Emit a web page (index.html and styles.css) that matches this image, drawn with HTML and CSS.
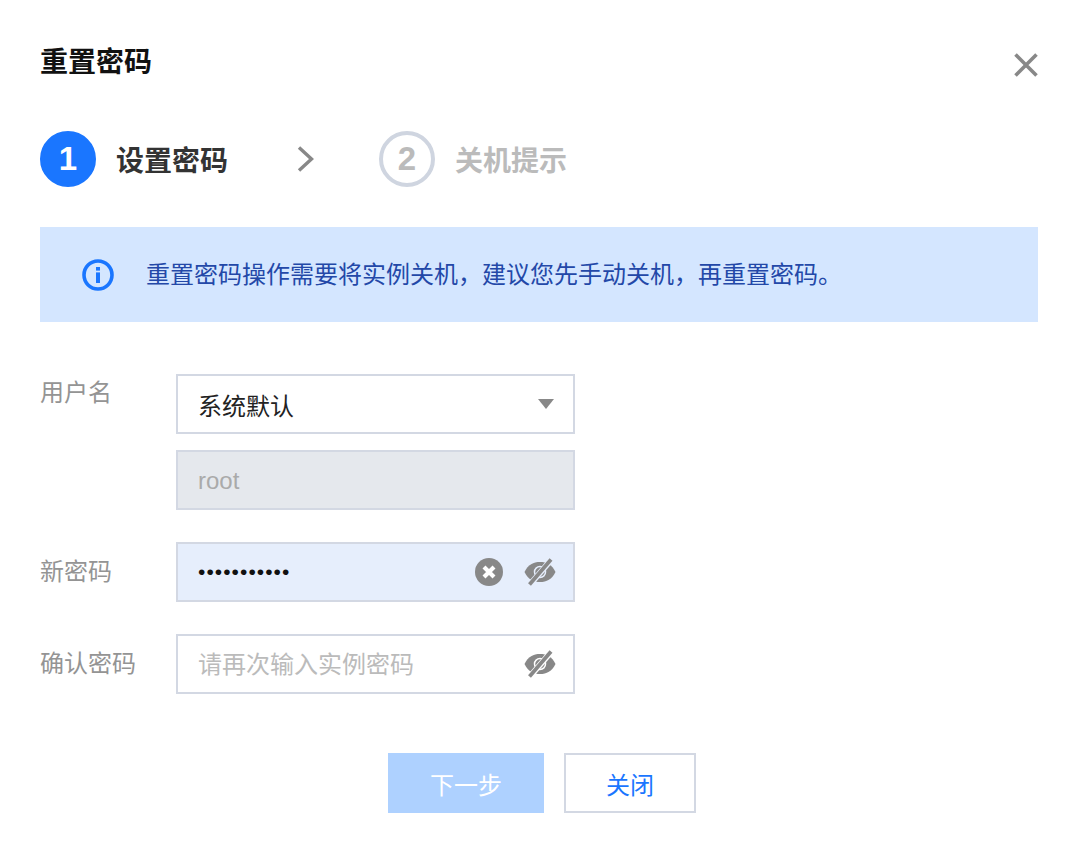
FILE: index.html
```html
<!DOCTYPE html>
<html lang="zh-CN">
<head>
  <meta charset="UTF-8">
  <meta name="viewport" content="width=device-width, initial-scale=1.0">
  <title>重置密码</title>
  <link rel="stylesheet" href="styles.css">
</head>
<body>
  <div class="dialog">
    <div class="dialog-head">
      <h1>重置密码</h1>
      <svg class="close-icon" viewBox="0 0 24 24" width="24" height="24"><path d="M1.5 1.500 22.500 22.500M22.500 1.500 1.500 22.500" stroke="#888" stroke-width="3.6" fill="none"/></svg>
    </div>

    <div class="steps">
      <div class="step active"><span class="step-num">1</span><span class="step-name">设置密码</span></div>
      <svg class="step-arrow" viewBox="0 0 17 26" width="17" height="26"><path d="M2 1.500 14.500 13 2 24.500" stroke="#888" stroke-width="3.4" fill="none"/></svg>
      <div class="step"><span class="step-num">2</span><span class="step-name">关机提示</span></div>
    </div>

    <div class="notice">
      <svg class="notice-icon" viewBox="0 0 32 32" width="32" height="32"><circle cx="16" cy="16" r="14" stroke="#1a76ff" stroke-width="3.6" fill="none"/><rect x="14" y="8" width="4" height="3.6" fill="#1a76ff"/><rect x="14" y="13.400" width="4" height="10.600" fill="#1a76ff"/></svg>
      <span class="notice-text">重置密码操作需要将实例关机，建议您先手动关机，再重置密码。</span>
    </div>

    <div class="form">
      <div class="form-row">
        <label>用户名</label>
        <div class="fields">
          <div class="field">
            <span class="value">系统默认</span>
            <span class="caret"></span>
          </div>
          <div class="field disabled"><span class="value">root</span></div>
        </div>
      </div>
      <div class="form-row centered">
        <label>新密码</label>
        <div class="fields">
          <div class="field filled">
            <span class="value dots">•••••••••••</span>
            <svg class="icon" viewBox="0 0 28 28" width="28" height="28"><circle cx="14" cy="14" r="14" fill="#888"/><path d="M9 9 19 19M19 9 9 19" stroke="#fff" stroke-width="4.200" fill="none"/></svg>
            <svg class="icon eye" viewBox="0 0 32 28"><use href="#eye-off"/></svg>
          </div>
        </div>
      </div>
      <div class="form-row centered">
        <label>确认密码</label>
        <div class="fields">
          <div class="field">
            <span class="value placeholder">请再次输入实例密码</span>
            <svg class="icon eye" viewBox="0 0 32 28"><use href="#eye-off"/></svg>
          </div>
        </div>
      </div>
    </div>

    <div class="actions">
      <button class="btn primary">下一步</button>
      <button class="btn">关闭</button>
    </div>
  </div>

  <svg class="defs" width="0" height="0">
    <symbol id="eye-off" viewBox="0 0 32 28">
      <path d="M0.500 14C4 6.500 9.500 4 16 4 22.500 4 28 6.500 31.500 14 28 21.500 22.500 24 16 24 9.500 24 4 21.500 0.500 14Z" fill="#888"/>
      <circle cx="16" cy="14" r="5.500" fill="none" stroke="currentColor" stroke-width="1.500"/>
      <path d="M6 26.500 27 2" stroke="currentColor" stroke-width="5.800"/>
      <path d="M5.500 26.500 27 1.500" stroke="#888" stroke-width="3.800"/>
    </symbol>
  </svg>
</body>
</html>
```

FILE: styles.css
```css
* {
  box-sizing: border-box;
}

body {
  margin: 0;
  background: #fff;
  font-family: "Liberation Sans", "Noto Sans CJK SC", sans-serif;
  font-size: 24px;
  color: #222;
}

.dialog {
  padding: 43px 42px 0 40px;
}

.dialog-head {
  display: flex;
  justify-content: space-between;
  align-items: flex-start;
  height: 88px;
}

.dialog-head h1 {
  margin: 0;
  font-size: 28px;
  line-height: 40px;
  font-weight: 700;
  color: #111;
}

.close-icon {
  margin-top: 10px;
}

.steps {
  display: flex;
  align-items: center;
  height: 56px;
}

.step {
  display: flex;
  align-items: center;
  gap: 20px;
  color: #bbb;
}

.step-num {
  display: flex;
  align-items: center;
  justify-content: center;
  width: 56px;
  height: 56px;
  border: 4px solid #cfd5e0;
  border-radius: 50%;
  font-size: 33px;
  font-weight: 700;
}

.step-name {
  font-size: 28px;
  font-weight: 700;
}

.step.active {
  color: #333;
}

.step.active .step-num {
  background: #1a76ff;
  border-color: #1a76ff;
  color: #fff;
}

.step-arrow {
  margin: 0 65px 0 69px;
}

.notice {
  display: flex;
  align-items: center;
  gap: 32px;
  height: 95px;
  margin-top: 40px;
  padding-left: 42px;
  background: #d4e6ff;
  color: #2348a8;
}

.notice-text {
  margin-bottom: 4px;
}

.form {
  margin-top: 52px;
}

.form-row {
  display: flex;
  margin-bottom: 32px;
}

.form-row label {
  flex: none;
  width: 136px;
  line-height: 38px;
  color: #949494;
}

.form-row.centered label {
  line-height: 60px;
}

.fields {
  display: flex;
  flex-direction: column;
  gap: 16px;
  width: 399px;
}

.field {
  display: flex;
  align-items: center;
  height: 60px;
  padding: 0 20px;
  border: 2px solid #d3d8e3;
  background: #fff;
  color: #222;
}

.field .value {
  flex: 1;
}

.field.disabled {
  background: #e5e8ed;
  color: #aaa;
}

.field.disabled .value {
  padding-top: 2px;
}

.field.filled {
  background: #e6eefc;
}

.dots {
  font-size: 21px;
  letter-spacing: 1.050px;
  color: #111;
}

.placeholder {
  padding-bottom: 4px;
  color: #bbb;
}

.caret {
  width: 0;
  height: 0;
  margin-right: -1px;
  border-left: 8px solid transparent;
  border-right: 8px solid transparent;
  border-top: 10px solid #888;
}

.icon {
  flex: none;
}

.eye {
  width: 32px;
  height: 28px;
  margin-left: 21px;
  margin-right: -3px;
  color: #fff;
}

.filled .eye {
  color: #e6eefc;
}

.defs {
  position: absolute;
}

.actions {
  display: flex;
  justify-content: center;
  gap: 20px;
  margin-top: 59px;
  padding-left: 6px;
}

.btn {
  width: 132px;
  height: 60px;
  border: 2px solid #d3d8e3;
  background: #fff;
  color: #1a76ff;
  font-family: inherit;
  font-size: 24px;
}

.btn.primary {
  width: 156px;
  border: none;
  background: #aed1ff;
  color: #fff;
}
```
